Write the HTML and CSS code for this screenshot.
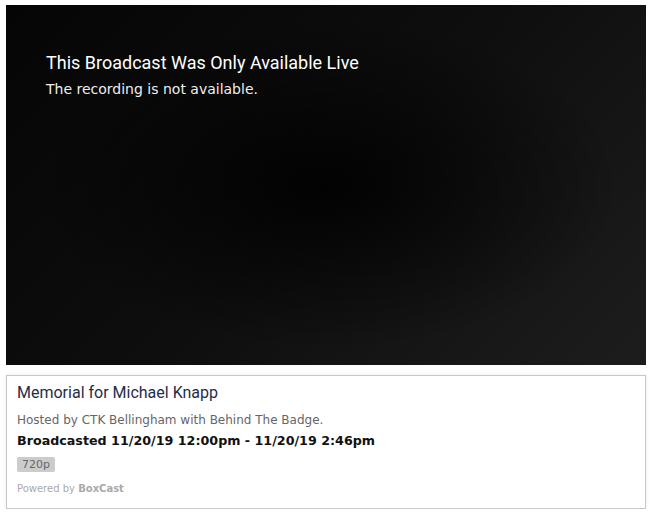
FILE: index.html
```html
<!DOCTYPE html>
<html lang="en">
<head>
  <meta charset="UTF-8" />
  <title>Memorial for Michael Knapp</title>
  <link rel="stylesheet" href="styles.css">
</head>
<body>
  <div class="player">
    <div class="player-msg">
      <h2>This Broadcast Was Only Available Live</h2>
      <p>The recording is not available.</p>
    </div>
  </div>

  <div class="info">
    <h1>Memorial for Michael Knapp</h1>
    <p class="host">Hosted by CTK Bellingham with Behind The Badge.</p>
    <p class="when">Broadcasted 11/20/19 12:00pm - 11/20/19 2:46pm</p>
    <span class="badge">720p</span>
    <p class="powered">Powered by <b>BoxCast</b></p>
  </div>
</body>
</html>
```

FILE: styles.css
```css
body {
  margin: 0;
  padding: 5px 7px 0 6px;
  background: #fff;
  font-family: "DejaVu Sans", Verdana, sans-serif;
}
.player {
  height: 360px;
  background:
    radial-gradient(ellipse at 50% 50%, rgba(0,0,0,0.85) 0%, rgba(0,0,0,0) 65%),
    linear-gradient(135deg, #050505 0%, #0e0e0e 50%, #1d1d1d 100%);
}
.player-msg {
  padding: 46px 40px 0;
  color: #fff;
}
.player-msg h2 {
  margin: 0;
  font-family: Roboto, sans-serif;
  font-weight: 400;
  font-size: 18px;
  line-height: 24px;
}
.player-msg p {
  margin: 4px 0 0;
  font-size: 14px;
  line-height: 20px;
  color: #eee;
}
.info {
  margin-top: 10px;
  border: 1px solid #c8c8c8;
  box-shadow: 0 0 4px rgba(0,0,0,0.08);
  padding: 6px 10px 12px;
}
.info h1 {
  margin: 0;
  font-family: Roboto, sans-serif;
  font-weight: 400;
  font-size: 16px;
  line-height: 22px;
  color: #1f2d4a;
}
.host {
  margin: 7px 0 0;
  font-size: 12px;
  line-height: 18px;
  color: #666;
}
.when {
  margin: 3px 0 0;
  font-size: 12.7px;
  font-weight: bold;
  line-height: 18px;
  color: #111;
}
.badge {
  display: inline-block;
  margin-top: 7px;
  padding: 1px 5px;
  background: #ccc;
  border-radius: 2px;
  font-size: 11px;
  line-height: 13px;
  color: #666;
}
.powered {
  margin: 10px 0 0;
  font-size: 10px;
  line-height: 14px;
  color: #aaa;
}
```
